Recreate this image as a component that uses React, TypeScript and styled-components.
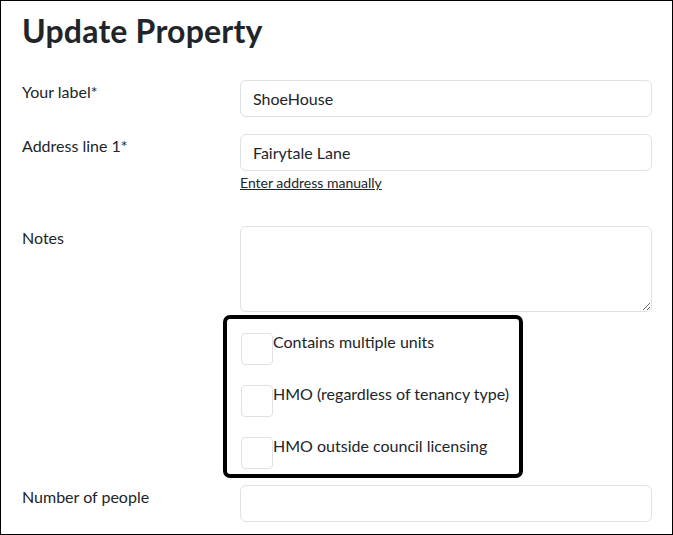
import React from "react";
import styled, { createGlobalStyle } from "styled-components";

const Global = createGlobalStyle`
  html, body { margin: 0; padding: 0; background: #fff; }
  * { box-sizing: border-box; }
  body { font-family: "Lato", "Noto Sans", sans-serif; color: #212529; }
`;

const Frame = styled.div`
  width: 673px;
  height: 535px;
  border: 1px solid #000;
  overflow: hidden;
  padding: 0 20px 0 21px;
`;

const Title = styled.h1`
  margin: 10px 0 0 0;
  font-size: 32px;
  line-height: 40px;
  font-weight: 700;
  letter-spacing: 0.2px;
  color: #212529;
`;

const Form = styled.form`
  margin-top: 29px;
  display: flex;
  flex-direction: column;
`;

const Row = styled.div<{ $mb: number }>`
  display: grid;
  grid-template-columns: 218px 412px;
  margin-bottom: ${(p) => p.$mb}px;
`;

const Label = styled.label`
  font-size: 16px;
  line-height: 24px;
`;

const Field = styled.div`
  display: flex;
  flex-direction: column;
`;

const Input = styled.input`
  width: 412px;
  height: 37px;
  padding: 6px 12px;
  font: inherit;
  font-size: 16px;
  line-height: 24px;
  color: #212529;
  border: 1px solid #dee2e6;
  border-radius: 6px;
  outline: none;
`;

const TextArea = styled.textarea`
  width: 412px;
  height: 86px;
  padding: 6px 12px;
  font: inherit;
  font-size: 16px;
  border: 1px solid #dee2e6;
  border-radius: 6px;
  resize: vertical;
  outline: none;
`;

const Link = styled.a`
  font-size: 14px;
  line-height: 20px;
  color: #212529;
  text-decoration: underline;
  margin-top: 2px;
`;

const CheckGroup = styled.div`
  margin-left: 201px;
  width: 300px;
  border: 4px solid #000;
  border-radius: 7px;
  padding: 14px 0 5px 14px;
  display: flex;
  flex-direction: column;
  gap: 20px;
  margin-bottom: 7px;
`;

const CheckRow = styled.label`
  display: flex;
  align-items: flex-start;
`;

const Box = styled.span`
  width: 32px;
  height: 32px;
  border: 1px solid #dee2e6;
  border-radius: 4px;
  flex: none;
`;

const CheckText = styled.span`
  font-size: 16px;
  line-height: 18px;
`;

export default function App() {
  return (
    <>
      <Global />
      <Frame>
        <Title>Update Property</Title>
        <Form>
          <Row $mb={17}>
            <Label>Your label*</Label>
            <Input defaultValue="ShoeHouse" />
          </Row>
          <Row $mb={33}>
            <Label>Address line 1*</Label>
            <Field>
              <Input defaultValue="Fairytale Lane" />
              <Link href="#">Enter address manually</Link>
            </Field>
          </Row>
          <Row $mb={3}>
            <Label>Notes</Label>
            <TextArea />
          </Row>
          <CheckGroup>
            <CheckRow>
              <Box />
              <CheckText>Contains multiple units</CheckText>
            </CheckRow>
            <CheckRow>
              <Box />
              <CheckText>HMO (regardless of tenancy type)</CheckText>
            </CheckRow>
            <CheckRow>
              <Box />
              <CheckText>HMO outside council licensing</CheckText>
            </CheckRow>
          </CheckGroup>
          <Row $mb={0}>
            <Label>Number of people</Label>
            <Input />
          </Row>
        </Form>
      </Frame>
    </>
  );
}
